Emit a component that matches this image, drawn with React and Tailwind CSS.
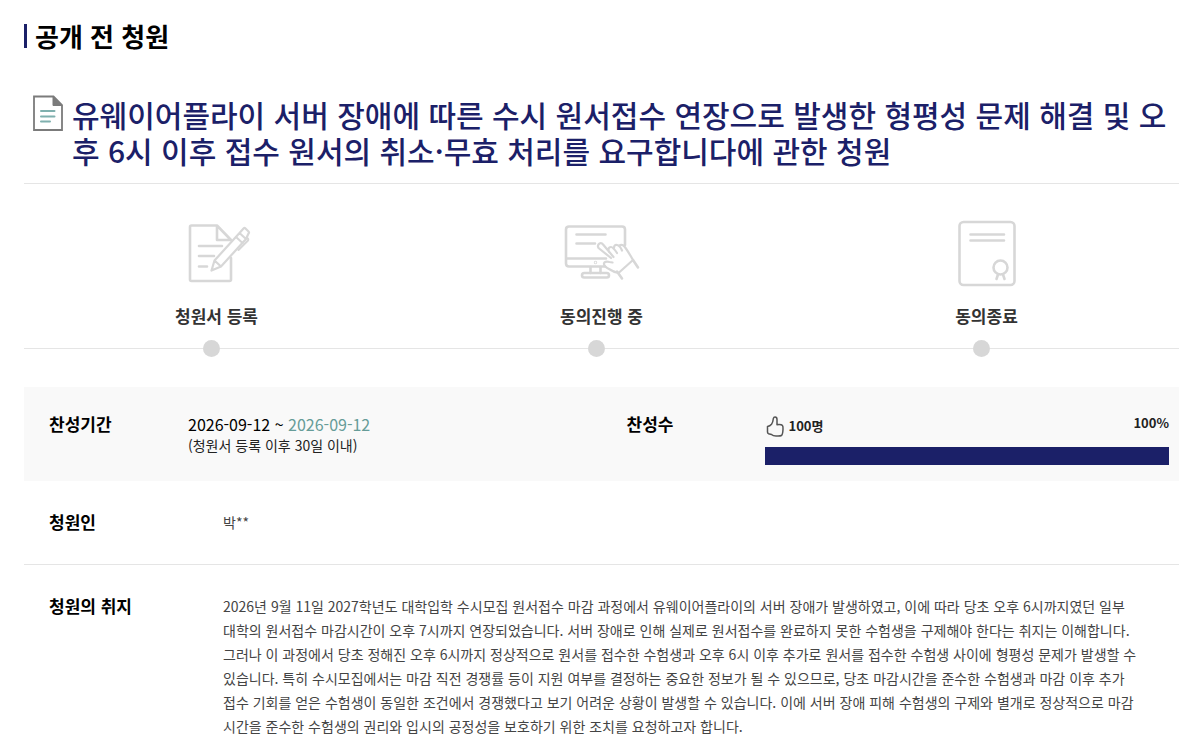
const PETITION = {
  title:
    '유웨이어플라이 서버 장애에 따른 수시 원서접수 연장으로 발생한 형평성 문제 해결 및 오후 6시 이후 접수 원서의 취소·무효 처리를 요구합니다에 관한 청원',
  startDate: '2026-09-12',
  endDate: '2026-09-12',
  agreeCount: 100,
  agreeRate: 100,
  petitioner: '박**',
  purpose: [
    '2026년 9월 11일 2027학년도 대학입학 수시모집 원서접수 마감 과정에서 유웨이어플라이의 서버 장애가 발생하였고, 이에 따라 당초 오후 6시까지였던 일부',
    '대학의 원서접수 마감시간이 오후 7시까지 연장되었습니다. 서버 장애로 인해 실제로 원서접수를 완료하지 못한 수험생을 구제해야 한다는 취지는 이해합니다.',
    '그러나 이 과정에서 당초 정해진 오후 6시까지 정상적으로 원서를 접수한 수험생과 오후 6시 이후 추가로 원서를 접수한 수험생 사이에 형평성 문제가 발생할 수',
    '있습니다. 특히 수시모집에서는 마감 직전 경쟁률 등이 지원 여부를 결정하는 중요한 정보가 될 수 있으므로, 당초 마감시간을 준수한 수험생과 마감 이후 추가',
    '접수 기회를 얻은 수험생이 동일한 조건에서 경쟁했다고 보기 어려운 상황이 발생할 수 있습니다. 이에 서버 장애 피해 수험생의 구제와 별개로 정상적으로 마감',
    '시간을 준수한 수험생의 권리와 입시의 공정성을 보호하기 위한 조치를 요청하고자 합니다.',
  ],
};

const DocumentIcon = () => (
  <svg className="w-[30px] h-9 shrink-0" viewBox="0 0 30 36" fill="none" aria-hidden="true">
    <path d="M1 1.500h19.500l8.500 8.500v25H1z" stroke="#7b7b7b" strokeWidth="1.800" />
    <path d="M20 1.500v9h9z" fill="#7b7b7b" stroke="#7b7b7b" />
    <path d="M8 16h13.500M8 21.500h13.500M8 26.500h9" stroke="#7fb0ae" strokeWidth="2" strokeLinecap="round" />
  </svg>
);

const StepIcon = ({ children }) => (
  <svg
    className="w-20 h-20"
    viewBox="0 0 80 80"
    fill="none"
    stroke="#d7d7d7"
    strokeWidth="2.600"
    strokeLinecap="round"
    strokeLinejoin="round"
    aria-hidden="true"
  >
    {children}
  </svg>
);

const RegisterIcon = () => (
  <StepIcon>
    <path d="M54 44v21.500q0 1.500-1.500 1.500h-38q-1.500 0-1.500-1.500V13q0-1.500 1.500-1.500H40L54 26H40V11.500" />
    <path d="M22 32h23M22 42h15M22 52.500h8" />
    <path
      d="M34.500 56.500l3-10L62.500 19l6.500 6-25 27.500zM37.500 46.500l6.500 6M62.500 19l4-4.500q1-1 2 0l3 3q1 1 0 2L69 25"
      strokeWidth="2.200"
    />
    <path d="M59 23l6.500 6M70 24q2 1 1 2.500L61.500 36" strokeWidth="2" />
  </StepIcon>
);

const AgreeIcon = () => (
  <StepIcon>
    <path d="M43 52.500H7q-3 0-3-3V15.500q0-3 3-3h53q3 0 3 3V31M4 44.500h40" />
    <path d="M14.500 20.500h29M14.500 29.500H33M28.500 53v6M38.500 53v6" />
    <rect x="20" y="59" width="27" height="4.500" rx="2.200" />
    <circle cx="33.500" cy="48.500" r=".4" />
    <path
      d="M49 44L36.500 34q-1.500-3 1-4.500 2-1 4 1.500l10 12M47 38q-1.500-5 2-5 2 0 6 6M52 34q0-3.500 3-3t5 5.500M57 32q2-2 4.500-.5 2 1.500 9.500 14.500L56.500 59q-5-1-9.500-4-5.500-3-5-5.500t5.500-1.500l3 .5"
      strokeWidth="2.200"
    />
    <path d="M71 46l5 7.500M55 57.500l5 7" />
  </StepIcon>
);

const FinishIcon = () => (
  <StepIcon>
    <rect x="12.500" y="8" width="55" height="63" rx="4" />
    <path d="M23.500 20.500h33.500M23.500 26.500h33.500" />
    <circle cx="53.500" cy="53.500" r="7" />
    <path d="M51 60.500l-1.500 4.500M56 60.500l1.500 4.500" />
  </StepIcon>
);

const ThumbIcon = () => (
  <svg className="w-5 h-6" viewBox="0 0 20 24" fill="none" aria-hidden="true">
    <path
      d="M2.500 12.500q2.500-.5 4-2.300 1.500-2 1.800-5.500Q8.700 3 10 3q2 0 2 2.500v5.200q4.500-.4 5.500.8.700.8.500 4-.3 5-1.500 6-1.500.8-5.500.5-3 0-4.500-1.500l-3-.8q-1-.5-1-1.700z"
      stroke="#555"
      strokeWidth="1.500"
      strokeLinejoin="round"
    />
  </svg>
);

const STEPS = [
  { label: '청원서 등록', Icon: RegisterIcon },
  { label: '동의진행 중', Icon: AgreeIcon },
  { label: '동의종료', Icon: FinishIcon },
];

const Steps = () => (
  <ol className="grid grid-cols-3 pt-[30px]">
    {STEPS.map(({ label, Icon }) => (
      <li key={label} className="flex flex-col items-center">
        <Icon />
        <span className="mt-[10px] text-[17px] leading-6 font-bold text-[#333]">{label}</span>
        {/* 진행 선과 점 */}
        <div className="mt-[11px] flex h-[18px] w-full items-center">
          <span className="h-px flex-1 bg-[#e5e5e5]" />
          <span className="size-[17px] rounded-full bg-[#d7d7d7]" />
          <span className="h-px flex-1 bg-[#e5e5e5]" />
          <span className="h-px w-[10px] bg-[#e5e5e5]" />
        </div>
      </li>
    ))}
  </ol>
);

const AgreeSummary = ({ startDate, endDate, agreeCount, agreeRate }) => (
  <dl className="mt-[30px] grid grid-cols-2 bg-[#f9f9f9] pt-[25px] pb-4 text-black">
    <div className="flex pl-[25px]">
      <dt className="w-[139px] shrink-0 text-[17px] leading-6 font-bold">찬성기간</dt>
      <dd>
        <p className="text-base leading-6">
          {startDate} ~ <span className="text-[#669c98]">{endDate}</span>
        </p>
        <p className="text-sm leading-[18px] text-[#222]">(청원서 등록 이후 30일 이내)</p>
      </dd>
    </div>
    <div className="flex pr-[10px] pl-[25px]">
      <dt className="w-[138px] shrink-0 text-[17px] leading-6 font-bold">찬성수</dt>
      <dd className="min-w-0 flex-1">
        <div className="flex items-start justify-between text-[13px] leading-[22px] font-bold text-[#222]">
          <span className="flex items-center gap-1 pt-[2px]">
            <ThumbIcon />
            {agreeCount}명
          </span>
          <span>{agreeRate}%</span>
        </div>
        <div className="mt-[9px] h-[18px]">
          <div className="h-full bg-[#1b2068]" style={{ width: `${agreeRate}%` }} />
        </div>
      </dd>
    </div>
  </dl>
);

const DetailRow = ({ label, children }) => (
  <div className="flex border-b border-[#e5e5e5] px-[25px] pt-[29px] pb-[30px]">
    <dt className="w-[174px] shrink-0 text-[17px] leading-6 font-bold text-black">{label}</dt>
    <dd className="min-w-0 flex-1 text-sm leading-6 text-[#444]">{children}</dd>
  </div>
);

export default function App() {
  return (
    <main
      lang="ko"
      className="bg-white pt-5 pr-[21px] pl-6 font-['Noto_Sans_CJK_KR',sans-serif]"
    >
      <h1 className="flex items-center gap-2 text-[26px] leading-8 font-bold text-black">
        <span className="h-6 w-[3px] bg-[#1b2068]" />
        공개 전 청원
      </h1>

      <section>
        <div className="mt-[43px] flex gap-[9px] border-b border-[#e5e5e5] pr-2 pb-[15px] pl-[9px]">
          <DocumentIcon />
          <h2 className="pt-[1px] text-[30px] leading-9 font-medium text-[#1b2068]">{PETITION.title}</h2>
        </div>

        <Steps />
        <AgreeSummary {...PETITION} />

        <dl>
          <DetailRow label="청원인">{PETITION.petitioner}</DetailRow>
          <DetailRow label="청원의 취지">
            {PETITION.purpose.map((line, index) => (
              <span key={index} className="block whitespace-nowrap">
                {line}
              </span>
            ))}
          </DetailRow>
        </dl>
      </section>
    </main>
  );
}
